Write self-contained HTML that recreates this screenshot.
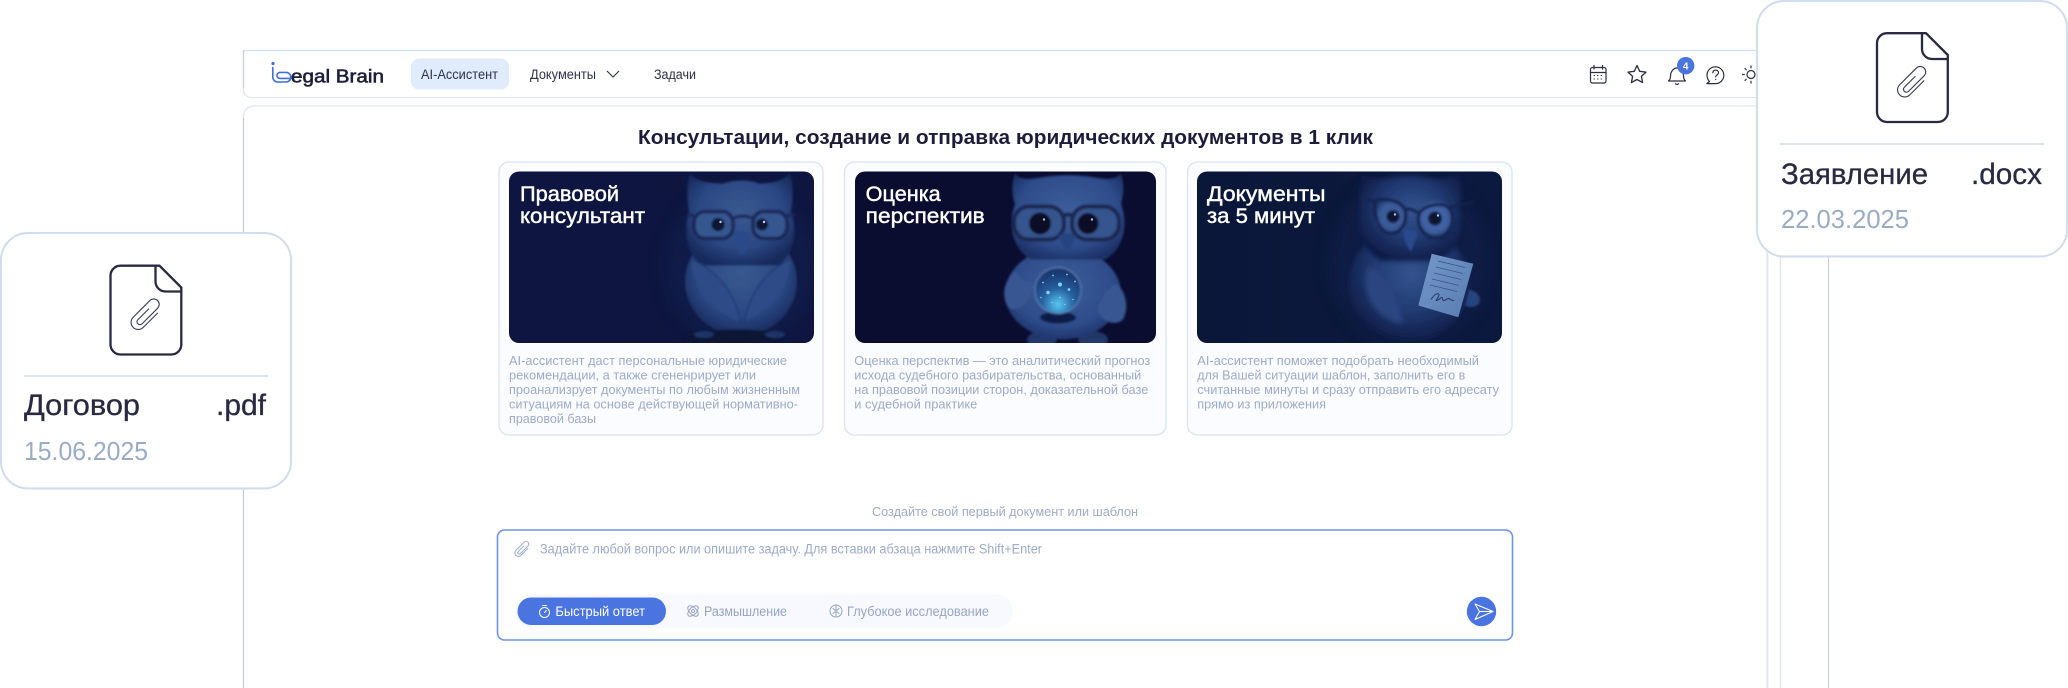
<!DOCTYPE html>
<html lang="ru">
<head>
<meta charset="utf-8">
<title>Legal Brain</title>
<style>
html,body{margin:0;padding:0;background:#fff;width:2068px;height:688px;overflow:hidden}
svg{display:block}
text{font-family:"Liberation Sans","Noto Sans CJK SC",sans-serif;white-space:pre}
.p{font-size:13px;fill:#9dabca}
.h{font-size:21.500px;fill:#fff;stroke:#fff;stroke-width:.45}
.nav{font-size:13.500px;fill:#2e3248}
.m{font-size:13.500px;fill:#97a5c3}
.nm{font-size:29.500px;fill:#2a2942;stroke:#2a2942;stroke-width:.3}
.dt{font-size:25.500px;fill:#9aabc6}
</style>
</head>
<body>
<svg width="2068" height="688" viewBox="0 0 2068 688" xmlns="http://www.w3.org/2000/svg">
<defs>
  <clipPath id="c1"><rect x="0" y="0" width="305" height="171.500" rx="10"/></clipPath>
  <clipPath id="c2"><rect x="0" y="0" width="301" height="171.500" rx="10"/></clipPath>
  <clipPath id="c3"><rect x="0" y="0" width="305" height="171.500" rx="10"/></clipPath>
  <radialGradient id="o1" cx="50%" cy="42%" r="60%"><stop offset="0" stop-color="#38598f"/><stop offset=".65" stop-color="#2b4884"/><stop offset="1" stop-color="#182a5c"/></radialGradient>
  <radialGradient id="o2" cx="50%" cy="42%" r="62%"><stop offset="0" stop-color="#3c5d9a"/><stop offset=".7" stop-color="#2e4c8a"/><stop offset="1" stop-color="#1c3066"/></radialGradient>
  <radialGradient id="o3" cx="52%" cy="42%" r="58%"><stop offset="0" stop-color="#34548f"/><stop offset=".55" stop-color="#213a72"/><stop offset="1" stop-color="#0f1d48"/></radialGradient>
  <linearGradient id="b1" x1="0" y1="0" x2="1" y2="0"><stop offset="0" stop-color="#0d1540"/><stop offset="1" stop-color="#0e1640"/></linearGradient>
  <linearGradient id="b3" x1="0" y1="0" x2="1" y2="0"><stop offset="0" stop-color="#0b1739"/><stop offset="1" stop-color="#0c193e"/></linearGradient>
  <radialGradient id="gl" cx="50%" cy="80%" r="70%"><stop offset="0" stop-color="#58c8f0"/><stop offset=".5" stop-color="#26609f"/><stop offset="1" stop-color="#1b3872"/></radialGradient>
  <linearGradient id="pap" x1="0" y1="0" x2="1" y2="1"><stop offset="0" stop-color="#7598c8"/><stop offset="1" stop-color="#587bb2"/></linearGradient>
  <filter id="s" x="-10%" y="-10%" width="120%" height="120%"><feGaussianBlur stdDeviation="1"/></filter>
  <filter id="sb" x="-20%" y="-20%" width="140%" height="140%"><feGaussianBlur stdDeviation="2.500"/></filter>
  <filter id="s2" x="-30%" y="-30%" width="160%" height="160%"><feGaussianBlur stdDeviation="8"/></filter>
  <g id="file">
    <path d="M11 1.200H50L71.800 23V80a10 10 0 0 1-10 10H11a10 10 0 0 1-10-10V11A10 10 0 0 1 11 1.200Z" fill="#fff" stroke="#2a2942" stroke-width="2.300" stroke-linejoin="round"/>
    <path d="M46 1.200V17a10 10 0 0 0 10 10H71.800" fill="none" stroke="#2a2942" stroke-width="2.300"/>
    <g transform="translate(36 51) rotate(45) scale(1.05)" fill="none" stroke="#3a3a55" stroke-width="1.050">
      <path d="M6.500-10V9.500a6.800 6.800 0 0 1-13.600 0V-13a5.200 5.200 0 0 1 10.400 0V8a2.800 2.800 0 0 1-5.600 0V-7"/>
    </g>
  </g>
</defs>

<rect width="2068" height="688" fill="#fff"/>

<!-- shell -->
<path d="M243.500 688V116a10 10 0 0 1 10-10H1770" fill="#fff" stroke="#e6eaef" stroke-width="1.500"/>
<path d="M243.500 688V118" fill="none" stroke="#bcc7d6" stroke-width="1"/>
<path d="M243.500 50.500H1800V97.500H251.500a8 8 0 0 1-8-8Z" fill="#fff" stroke="#e0e6ee" stroke-width="1.300"/>
<path d="M243 50.500H1800" stroke="#d3e0ef" stroke-width="1.300"/>
<path d="M243.500 50.500V88" stroke="#c3d0e2" stroke-width="1.200"/>
<line x1="1767.500" y1="100" x2="1767.500" y2="688" stroke="#e0e6ee" stroke-width="2"/>
<line x1="1780.500" y1="100" x2="1780.500" y2="688" stroke="#dde4ee" stroke-width="1.400"/>
<line x1="1828.500" y1="100" x2="1828.500" y2="688" stroke="#c4cbd6" stroke-width="1"/>

<!-- logo -->
<circle cx="273" cy="63.500" r="1.600" fill="#3f6fe0"/>
<path d="M272.800 67.500V77a5 5 0 0 0 5 5H286a4.800 4.800 0 0 0 0-9.600H280a3 3 0 0 0 0 6H291" fill="none" stroke="#3f6fe0" stroke-width="1.600" stroke-linecap="round"/>
<text x="291" y="82.500" font-size="18.500" textLength="93" lengthAdjust="spacingAndGlyphs" fill="#1c1f3a" stroke="#1c1f3a" stroke-width=".6">egal Brain</text>

<!-- nav -->
<rect x="411" y="58.500" width="98" height="31" rx="8" fill="#e0ebfb"/>
<text class="nav" x="421" y="79" textLength="77" lengthAdjust="spacingAndGlyphs">AI-Ассистент</text>
<text class="nav" x="530" y="79" textLength="66" lengthAdjust="spacingAndGlyphs">Документы</text>
<path d="M607 71l6 6 6-6" fill="none" stroke="#2e3248" stroke-width="1.100"/>
<text class="nav" x="654" y="79" textLength="42" lengthAdjust="spacingAndGlyphs">Задачи</text>

<!-- nav icons -->
<g fill="none" stroke="#2b2d45" stroke-width="1.200" stroke-linecap="round" stroke-linejoin="round">
  <rect x="1590.500" y="67.500" width="15.500" height="15.500" rx="2"/>
  <path d="M1590.500 72.500H1606M1594 65.500V69M1602.500 65.500V69"/>
  <path d="M1594 75.500h.6M1597.500 75.500h.6M1601 75.500h.6M1594 79h.6M1597.500 79h.6M1601 79h.6" stroke-width=".9"/>
  <path d="M1637 65.500l2.700 5.800 6.300.8-4.600 4.300 1.200 6.200-5.600-3.100-5.600 3.100 1.200-6.200-4.600-4.300 6.300-.8Z" stroke-width="1.300"/>
  <path d="M1668.500 81c1.500-1.200 2-2.500 2-5 0-4 2.800-8 6.500-8s6.500 4 6.500 8c0 2.500 .5 3.800 2 5ZM1675.500 83.800c1 .8 2 .8 3 0"/>
  <path d="M1709.500 81.500c-1.500-1.700-2.500-3.500-2.500-6.300a8.400 8.400 0 1 1 8.400 8.400h-8.600Z"/>
  <path d="M1712.800 72.800c.2-1.800 1.400-2.700 2.900-2.700 1.500 0 2.800 1 2.800 2.500 0 2.300-2.800 2.200-2.800 4.300M1715.700 79.400v.1"/>
  <circle cx="1751" cy="74.500" r="4"/>
  <path d="M1751 66v1.800M1745 68.500l1.300 1.300M1742.500 74.500h1.800M1745 80.500l1.300-1.300M1751 83v-1.800"/>
</g>
<circle cx="1685.700" cy="65.700" r="8.700" fill="#4a75e0"/>
<text x="1685.700" y="69.500" font-size="10" font-weight="700" fill="#fff" text-anchor="middle">4</text>

<!-- title -->
<text x="638" y="144" font-size="20.500" font-weight="700" fill="#1d1d3b" textLength="735" lengthAdjust="spacingAndGlyphs">Консультации, создание и отправка юридических документов в 1 клик</text>

<!-- card shells -->
<rect x="499" y="162" width="324" height="273" rx="10" fill="#fbfcff" stroke="#d9e3f3" stroke-width="1.300"/>
<rect x="844.500" y="162" width="321.500" height="273" rx="10" fill="#fbfcff" stroke="#d9e3f3" stroke-width="1.300"/>
<rect x="1187.500" y="162" width="324.500" height="273" rx="10" fill="#fbfcff" stroke="#d9e3f3" stroke-width="1.300"/>

<!-- image 1 -->
<g transform="translate(509 171.500)"><g clip-path="url(#c1)">
  <rect width="305" height="172" fill="url(#b1)"/>
  <ellipse cx="232" cy="95" rx="78" ry="78" fill="#182858" opacity=".35" filter="url(#s2)"/>
  <g filter="url(#s)">
    <ellipse cx="232" cy="110" rx="56" ry="54" fill="url(#o1)"/>
    <path d="M181 2C186 9 198 12 214 12C226 8 240 8 250 12C264 12 275 9 281 2C285 16 284 30 282 40C289 60 285 82 270 94H192C178 82 174 60 180 40C178 28 177 15 181 2Z" fill="url(#o1)"/>
    <path d="M183 88C181 115 205 140 231 150C228 125 210 100 183 88Z" fill="#2d4b88"/>
    <path d="M281 88C283 115 259 140 236 150C239 125 255 100 281 88Z" fill="#2d4b88"/>
    <path d="M231 150C228 125 210 100 183 88M236 150C239 125 255 100 281 88" fill="none" stroke="#1f3670" stroke-width="1.200"/>
    <rect x="185" y="40" width="39" height="27" rx="11" fill="#36578f" stroke="#1c2858" stroke-width="3.600"/>
    <rect x="244" y="40" width="34" height="27" rx="11" fill="#36578f" stroke="#1c2858" stroke-width="3.600"/>
    <path d="M224 47Q234 42 244 47M185 44L178 43M278 44L286 43" fill="none" stroke="#1c2858" stroke-width="3"/>
    <circle cx="209" cy="53" r="6.600" fill="#0b1230"/>
    <circle cx="253" cy="53" r="6" fill="#0b1230"/>
    <path d="M225 62Q233 58 242 62Q241 76 233 84Q227 76 225 62Z" fill="#294988"/>
    <ellipse cx="225" cy="165" rx="50" ry="7" fill="#0b1335"/>
    <ellipse cx="195" cy="163" rx="10" ry="3.500" fill="#1f3466"/>
    <ellipse cx="266" cy="163" rx="10" ry="3.500" fill="#1f3466"/>
  </g>
  <circle cx="211.500" cy="50.500" r="1.200" fill="#c7d6f2"/>
  <circle cx="255" cy="50.500" r="1.200" fill="#c7d6f2"/>
</g></g>

<!-- image 2 -->
<g transform="translate(855 171.500)"><g clip-path="url(#c2)">
  <rect width="301" height="172" fill="#0a0c30"/>
  <g filter="url(#s)">
    <ellipse cx="187" cy="168" rx="15" ry="8" fill="#24396a"/>
    <ellipse cx="238" cy="168" rx="15" ry="8" fill="#24396a"/>
    <ellipse cx="208" cy="122" rx="58" ry="46" fill="url(#o2)"/>
    <path d="M160 2C164 8 172 8 186 6C204 3 222 3 240 6C252 8 262 8 266 2C270 14 268 24 266 32C274 55 268 78 250 88H176C158 78 152 55 160 32C157 24 156 14 160 2Z" fill="url(#o2)"/>
    <path d="M160 100C150 108 146 122 152 134C158 142 170 136 174 126C176 122 178 118 184 116C186 112 182 108 176 110C172 112 168 110 160 100Z" fill="#375692"/>
    <path d="M262 112C270 120 275 135 268 148C262 154 250 152 244 142C240 134 248 128 250 122C254 118 258 114 262 112Z" fill="#375692"/>
    <rect x="159" y="35" width="50" height="33" rx="15" fill="#36548f" stroke="#1c2850" stroke-width="4"/>
    <rect x="217" y="35" width="47" height="33" rx="15" fill="#36548f" stroke="#1c2850" stroke-width="4"/>
    <path d="M209 44Q213 42 217 44" fill="none" stroke="#1c2850" stroke-width="4"/>
    <circle cx="185" cy="52" r="11" fill="#0a0d28"/>
    <circle cx="233" cy="52" r="10.500" fill="#0a0d28"/>
    <path d="M203 64Q212 60 221 64Q217 76 212 78Q207 76 203 64Z" fill="#28447e"/>
    <ellipse cx="203" cy="146" rx="18" ry="6" fill="#111c46"/>
    <circle cx="203" cy="119" r="23" fill="url(#gl)" stroke="#6f97cc" stroke-width=".7"/>
  </g>
  <circle cx="189" cy="48" r="1.200" fill="#aebfdd"/>
  <circle cx="237" cy="48" r="1.200" fill="#aebfdd"/>
  <g fill="#7fd4f2">
    <circle cx="205" cy="113" r="2"/><circle cx="193" cy="121" r="1.800"/><circle cx="214" cy="118" r="1.400"/>
    <circle cx="188" cy="111" r=".9"/><circle cx="198" cy="104" r=".9"/><circle cx="212" cy="103" r=".9"/>
    <circle cx="220" cy="110" r=".9"/><circle cx="205" cy="126" r=".9"/><circle cx="186" cy="126" r=".8"/>
    <circle cx="218" cy="128" r=".8"/><circle cx="197" cy="131" r=".8"/><circle cx="210" cy="133" r=".8"/>
  </g>
</g></g>

<!-- image 3 -->
<g transform="translate(1197 171.500)"><g clip-path="url(#c3)">
  <rect width="305" height="172" fill="url(#b3)"/>
  <ellipse cx="212" cy="90" rx="80" ry="85" fill="#152656" opacity=".35" filter="url(#s2)"/>
  <g filter="url(#sb)">
    <ellipse cx="212" cy="112" rx="60" ry="58" fill="url(#o3)"/>
    <path d="M166 2C172 8 182 8 194 6C208 3 222 4 238 8C246 8 254 6 262 2C266 16 264 28 262 38C268 55 262 80 240 90H184C166 80 158 55 164 38C162 26 162 14 166 2Z" fill="url(#o3)"/>
    <path d="M172 95C162 115 177 150 206 152C202 130 192 105 172 95Z" fill="#2a4580"/>
    <ellipse cx="194" cy="45" rx="14" ry="15" fill="#3a5a98"/>
    <ellipse cx="238" cy="47" rx="16" ry="16" fill="#3f62a2"/>
  </g>
  <g filter="url(#s)">
    <path d="M178 30C180 26 200 27 207 36C212 45 207 62 194 62C182 62 176 44 178 30Z" fill="none" stroke="#16224d" stroke-width="2.600"/>
    <path d="M222 42C226 34 244 30 252 36C258 42 258 60 244 66C230 70 218 56 222 42Z" fill="none" stroke="#16224d" stroke-width="2.600"/>
    <path d="M207 38Q214 36 222 42M252 36L277 30M178 30L170 28" fill="none" stroke="#16224d" stroke-width="2.400"/>
    <circle cx="196" cy="45" r="6" fill="#0b1230"/>
    <circle cx="238" cy="47" r="6.500" fill="#0b1230"/>
    <path d="M206 58Q214 56 221 62L214 80Q208 74 206 58Z" fill="#294a8c"/>
    <path d="M272 118Q286 122 282 132Q276 138 268 134Z" fill="#28447f"/>
  </g>
  <polygon points="234.700,82.300 276.300,92.300 261.300,145.700 221.300,134" fill="url(#pap)"/>
  <g stroke="#3a5588" stroke-width=".8" fill="none">
    <path d="M241 89.500L268 96M239 95.500L266 102M237 101.500L264 108M235 107.500L262 114M233 113.500L260 120"/>
    <path d="M234 128c3-5 7-7 8-5s-5 7-2 6 4-4 5-3 0 3 2 3 4-3 5-2 2 2 5 2" stroke="#243a66" stroke-width="1"/>
  </g>
  <circle cx="198" cy="43" r="1.200" fill="#b6c8e8"/>
  <circle cx="241" cy="44" r="1.200" fill="#b6c8e8"/>
</g></g>

<!-- image headings -->
<text class="h" x="520" y="201" textLength="99" lengthAdjust="spacingAndGlyphs">Правовой</text>
<text class="h" x="520" y="223" textLength="125" lengthAdjust="spacingAndGlyphs">консультант</text>
<text class="h" x="865.700" y="201" textLength="75" lengthAdjust="spacingAndGlyphs">Оценка</text>
<text class="h" x="865.700" y="223" textLength="119" lengthAdjust="spacingAndGlyphs">перспектив</text>
<text class="h" x="1207" y="201" textLength="118.500" lengthAdjust="spacingAndGlyphs">Документы</text>
<text class="h" x="1207" y="223" textLength="108" lengthAdjust="spacingAndGlyphs">за 5 минут</text>

<!-- card paragraphs -->
<text class="p" x="509" y="365" textLength="278" lengthAdjust="spacingAndGlyphs">AI-ассистент даст персональные юридические</text>
<text class="p" x="509" y="379.600" textLength="247" lengthAdjust="spacingAndGlyphs">рекомендации, а также сгененрирует или</text>
<text class="p" x="509" y="394.200" textLength="291" lengthAdjust="spacingAndGlyphs">проанализрует документы по любым жизненным</text>
<text class="p" x="509" y="408.500" textLength="289" lengthAdjust="spacingAndGlyphs">ситуациям на основе действующей нормативно-</text>
<text class="p" x="509" y="423" textLength="87" lengthAdjust="spacingAndGlyphs">правовой базы</text>

<text class="p" x="854.300" y="365" textLength="296" lengthAdjust="spacingAndGlyphs">Оценка перспектив — это аналитический прогноз</text>
<text class="p" x="854.300" y="379.600" textLength="287" lengthAdjust="spacingAndGlyphs">исхода судебного разбирательства, основанный</text>
<text class="p" x="854.300" y="394.200" textLength="294" lengthAdjust="spacingAndGlyphs">на правовой позиции сторон, доказательной базе</text>
<text class="p" x="854.300" y="408.500" textLength="123" lengthAdjust="spacingAndGlyphs">и судебной практике</text>

<text class="p" x="1197.300" y="365" textLength="281.700" lengthAdjust="spacingAndGlyphs">AI-ассистент поможет подобрать необходимый</text>
<text class="p" x="1197.300" y="379.600" textLength="268" lengthAdjust="spacingAndGlyphs">для Вашей ситуации шаблон, заполнить его в</text>
<text class="p" x="1197.300" y="394.200" textLength="301.700" lengthAdjust="spacingAndGlyphs">считанные минуты и сразу отправить его адресату</text>
<text class="p" x="1197.300" y="408.500" textLength="128.700" lengthAdjust="spacingAndGlyphs">прямо из приложения</text>

<!-- prompt -->
<text class="p" x="872" y="516" textLength="266" lengthAdjust="spacingAndGlyphs">Создайте свой первый документ или шаблон</text>
<rect x="497.500" y="530" width="1015" height="110" rx="7" fill="#fff" stroke="#6e93ea" stroke-width="1.600"/>
<g transform="translate(522 549.500) rotate(45) scale(.52)" fill="none" stroke="#9dabca" stroke-width="1.900">
  <path d="M6.500-10V9.500a6.800 6.800 0 0 1-13.600 0V-13a5.200 5.200 0 0 1 10.400 0V8a2.800 2.800 0 0 1-5.600 0V-7"/>
</g>
<text class="m" x="540" y="553.500" style="fill:#9dabca" textLength="502" lengthAdjust="spacingAndGlyphs">Задайте любой вопрос или опишите задачу. Для вставки абзаца нажмите Shift+Enter</text>

<rect x="515" y="594" width="498" height="34" rx="17" fill="#f7f9ff"/>
<rect x="517.500" y="597.500" width="148.500" height="27.500" rx="13.700" fill="#4a75e0"/>
<g fill="none" stroke="#fff" stroke-width="1" stroke-linecap="round">
  <circle cx="544.500" cy="612.500" r="5"/>
  <path d="M542.500 605.500h4M544.500 612.500l1.800-2"/>
</g>
<text x="555.400" y="616" font-size="13.500" fill="#fff" textLength="89.600" lengthAdjust="spacingAndGlyphs">Быстрый ответ</text>

<g fill="none" stroke="#97a5c3" stroke-width="1">
  <ellipse cx="693" cy="611" rx="6.500" ry="3.500" transform="rotate(45 693 611)"/>
  <ellipse cx="693" cy="611" rx="6.500" ry="3.500" transform="rotate(-45 693 611)"/>
  <circle cx="693" cy="611" r="1.500"/>
</g>
<text class="m" x="704" y="616" textLength="83" lengthAdjust="spacingAndGlyphs">Размышление</text>

<g fill="none" stroke="#97a5c3" stroke-width="1" stroke-linecap="round">
  <circle cx="836" cy="611" r="6"/>
  <path d="M836 605V617M833 608.500l1.500 1.500H836M839 608.500l-1.500 1.500H836M833 613.500l1.500-1.500H836M839 613.500l-1.500-1.500H836"/>
</g>
<text class="m" x="847" y="616" textLength="142" lengthAdjust="spacingAndGlyphs">Глубокое исследование</text>

<circle cx="1481.500" cy="611.500" r="14.700" fill="#4a75e0"/>
<path d="M1475 604L1493 611.500 1475 619.500 1479.500 611.500ZM1479.500 611.500H1493" fill="none" stroke="#fff" stroke-width="1" stroke-linejoin="round"/>

<!-- left floating card -->
<rect x="1" y="233" width="290" height="255.500" rx="27" fill="#fff" stroke="#d0ddec" stroke-width="2"/>
<use href="#file" x="109.500" y="264.500"/>
<line x1="24" x2="268" y1="376" y2="376" stroke="#d0ddec" stroke-width="1.600"/>
<text class="nm" x="24" y="415" textLength="116" lengthAdjust="spacingAndGlyphs">Договор</text>
<text class="nm" x="216" y="415" textLength="50" lengthAdjust="spacingAndGlyphs">.pdf</text>
<text class="dt" x="24" y="460" textLength="124" lengthAdjust="spacingAndGlyphs">15.06.2025</text>

<!-- right floating card -->
<rect x="1757" y="1" width="310" height="255.500" rx="27" fill="#fff" stroke="#d0ddec" stroke-width="2"/>
<use href="#file" x="1876" y="32"/>
<line x1="1780" x2="2044" y1="144" y2="144" stroke="#d0ddec" stroke-width="1.600"/>
<text class="nm" x="1781" y="184" textLength="147" lengthAdjust="spacingAndGlyphs">Заявление</text>
<text class="nm" x="1971" y="184" textLength="71" lengthAdjust="spacingAndGlyphs">.docx</text>
<text class="dt" x="1781" y="228" textLength="128" lengthAdjust="spacingAndGlyphs">22.03.2025</text>
</svg>
</body>
</html>
